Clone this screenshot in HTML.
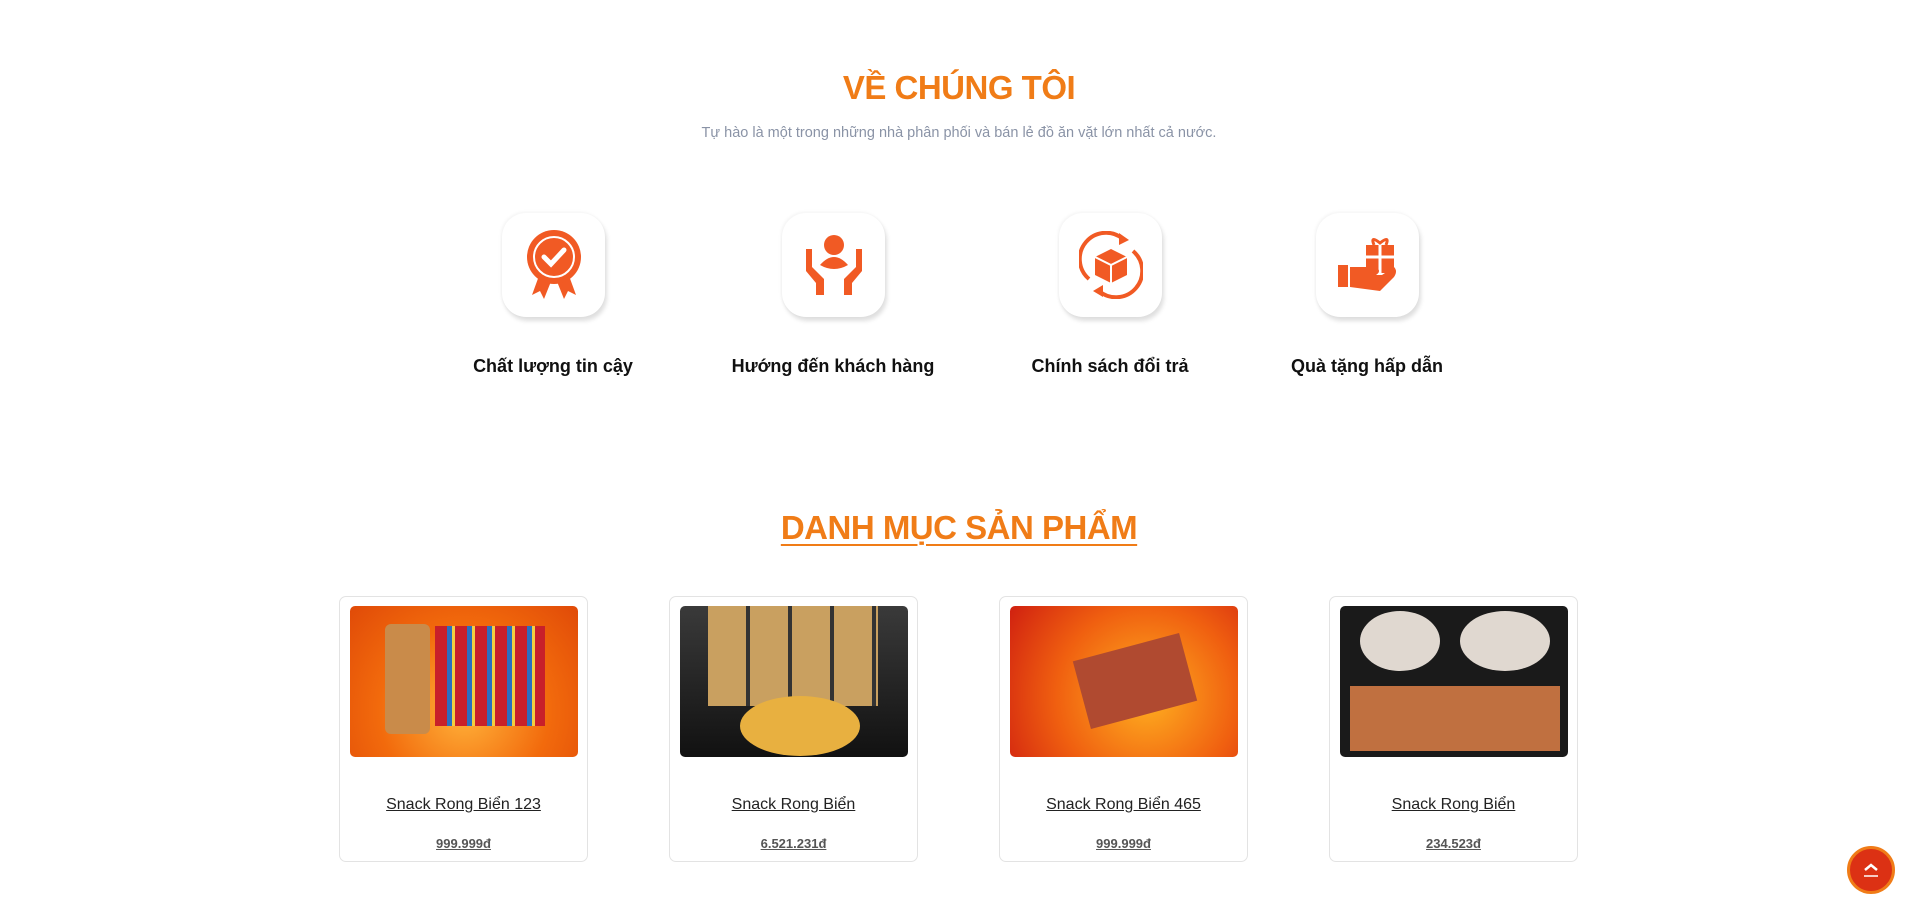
<!DOCTYPE html>
<html><head><meta charset="utf-8"><style>
*{box-sizing:border-box;margin:0;padding:0}
body{width:1918px;height:914px;background:#fff;font-family:"Liberation Sans",sans-serif;position:relative;overflow:hidden}
.abs{position:absolute}
.t1{left:0;width:1918px;text-align:center;color:#f07c17;font-size:33px;font-weight:bold;top:69px;letter-spacing:-0.5px}
.sub{left:0;width:1918px;text-align:center;color:#8a93a6;font-size:14.5px;top:125px}
.ib{width:103px;height:104px;border-radius:24px;background:#fff;box-shadow:2px 4px 4px rgba(0,0,0,.13),-1px -1px 3px rgba(0,0,0,.05);top:213px;display:flex;align-items:center;justify-content:center}
.lb{top:356px;width:260px;text-align:center;font-size:18px;font-weight:bold;color:#111}
.t2{left:0;width:1918px;text-align:center;top:509px;font-size:33px;font-weight:bold;color:#f07c17;letter-spacing:-0.5px}
.t2 span{text-decoration:underline;text-decoration-thickness:2px;text-underline-offset:5px}
.card{top:596px;width:249px;height:266px;border:1px solid #e3e3e3;border-radius:7px}
.img{position:absolute;left:10px;top:9px;width:228px;height:151px;border-radius:5px;overflow:hidden}
.nm{position:absolute;top:199px;left:0;width:100%;text-align:center;font-size:16px;color:#222;text-decoration:underline}
.pr{position:absolute;top:239px;left:0;width:100%;text-align:center;font-size:13px;color:#555;text-decoration:underline;font-weight:bold}
</style></head><body>
<div class="abs t1">VỀ CHÚNG TÔI</div>
<div class="abs sub">Tự hào là một trong những nhà phân phối và bán lẻ đồ ăn vặt lớn nhất cả nước.</div>

<div class="abs ib" style="left:502px"><svg width="56" height="72" viewBox="0 0 56 72"><path d="M14 44 L6 66 L14 62 L18 70 L26 50Z M42 44 L50 66 L42 62 L38 70 L30 50Z" fill="#f15a24"/><circle cx="28" cy="28" r="27" fill="#f15a24"/><circle cx="28" cy="28" r="20" fill="none" stroke="#fff" stroke-width="2"/><path d="M18 28 L25 35 L38 21" fill="none" stroke="#fff" stroke-width="5" stroke-linecap="round"/></svg></div>
<div class="abs ib" style="left:782px"><svg width="60" height="64" viewBox="0 0 60 64"><circle cx="30" cy="12" r="10" fill="#f15a24"/><path d="M16 32 Q30 16 44 32 Q30 40 16 32Z" fill="#f15a24"/><path d="M2 16 L8 16 L8 34 L20 46 L20 62 L12 62 L12 50 L2 38Z M58 16 L52 16 L52 34 L40 46 L40 62 L48 62 L48 50 L58 38Z" fill="#f15a24"/></svg></div>
<div class="abs ib" style="left:1059px"><svg width="64" height="68" viewBox="0 0 64 68"><path d="M10 48 A26 26 0 0 1 44 8" fill="none" stroke="#f15a24" stroke-width="4"/><path d="M54 20 A26 26 0 0 1 20 60" fill="none" stroke="#f15a24" stroke-width="4"/><path d="M40 2 L50 9 L40 14Z M24 54 L14 60 L24 66Z" fill="#f15a24"/><path d="M32 18 L48 26 L48 44 L32 52 L16 44 L16 26Z" fill="#f15a24"/><path d="M16 26 L32 34 L48 26 M32 34 L32 52" stroke="#fff" stroke-width="2" fill="none"/></svg></div>
<div class="abs ib" style="left:1316px"><svg width="64" height="60" viewBox="0 0 64 60"><rect x="30" y="10" width="28" height="28" fill="#f15a24"/><path d="M30 22 H58 M44 10 V38" stroke="#fff" stroke-width="3"/><path d="M38 10 Q34 0 44 8 Q54 0 50 10" fill="none" stroke="#f15a24" stroke-width="3"/><rect x="2" y="30" width="10" height="22" fill="#f15a24"/><path d="M14 32 L40 32 Q46 36 40 40 L28 40 L46 40 L58 32 Q62 36 58 42 L44 56 L14 52Z" fill="#f15a24"/></svg></div>

<div class="abs lb" style="left:423px">Chất lượng tin cậy</div>
<div class="abs lb" style="left:703px">Hướng đến khách hàng</div>
<div class="abs lb" style="left:980px">Chính sách đổi trả</div>
<div class="abs lb" style="left:1237px">Quà tặng hấp dẫn</div>

<div class="abs t2"><span>DANH MỤC SẢN PHẨM</span></div>

<div class="abs card" style="left:339px"><div class="img" style="background:radial-gradient(circle at 50% 70%,#ffb23a,#f26a0c 55%,#e04a08)"><div style="position:absolute;left:35px;top:18px;width:45px;height:110px;background:#c98b4a;border-radius:6px"></div><div style="position:absolute;left:85px;top:20px;width:110px;height:100px;background:repeating-linear-gradient(90deg,#c8202a 0 12px,#2a6fc0 12px 17px,#f2d040 17px 20px)"></div></div><div class="nm">Snack Rong Biển 123</div><div class="pr">999.999đ</div></div>
<div class="abs card" style="left:669px"><div class="img" style="background:linear-gradient(180deg,#3a3a3a,#111)"><div style="position:absolute;left:28px;top:0;width:170px;height:100px;background:repeating-linear-gradient(90deg,#c9a060 0 38px,#333 38px 42px)"></div><div style="position:absolute;left:60px;top:90px;width:120px;height:60px;border-radius:50%;background:#e8b040"></div></div><div class="nm">Snack Rong Biển</div><div class="pr">6.521.231đ</div></div>
<div class="abs card" style="left:999px"><div class="img" style="background:radial-gradient(circle at 60% 60%,#ffb020,#f06010 55%,#d02010)"><div style="position:absolute;left:70px;top:40px;width:110px;height:70px;background:#b04a30;transform:rotate(-15deg)"></div></div><div class="nm">Snack Rong Biển 465</div><div class="pr">999.999đ</div></div>
<div class="abs card" style="left:1329px"><div class="img" style="background:#1a1a1a"><div style="position:absolute;left:20px;top:5px;width:80px;height:60px;border-radius:50%;background:#e0d8d0"></div><div style="position:absolute;left:120px;top:5px;width:90px;height:60px;border-radius:50%;background:#e0d8d0"></div><div style="position:absolute;left:10px;top:80px;width:210px;height:65px;background:#c07040"></div></div><div class="nm">Snack Rong Biển</div><div class="pr">234.523đ</div></div>

<div class="abs" style="left:1847px;top:846px;width:48px;height:48px;border-radius:50%;background:#dc3114;border:3px solid #f07c17;display:flex;align-items:center;justify-content:center"><svg width="20" height="20" viewBox="0 0 20 20"><path d="M4 10 L10 5 L16 10" fill="none" stroke="#fff" stroke-width="2.5"/><path d="M3 16 H17" stroke="#fff" stroke-width="1.5"/></svg></div>
</body></html>
